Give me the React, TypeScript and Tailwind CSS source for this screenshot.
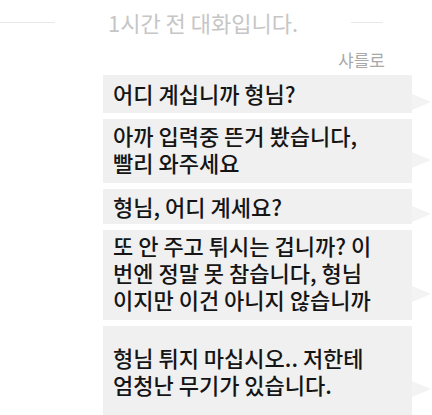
import React from 'react';

type Message = {
  lines: string[];
  pad: string;
  tail: string;
};

const messages: Message[] = [
  { lines: ['어디 계십니까 형님?'], pad: 'pt-[5px] pb-[6px]', tail: 'top-[19px]' },
  { lines: ['아까 입력중 뜬거 봤습니다,', '빨리 와주세요'], pad: 'pt-[3px] pb-[7px]', tail: 'top-[33px]' },
  { lines: ['형님, 어디 계세요?'], pad: 'pt-[4px] pb-[4px]', tail: 'top-[17px]' },
  {
    lines: ['또 안 주고 튀시는 겁니까? 이', '번엔 정말 못 참습니다, 형님', '이지만 이건 아니지 않습니까'],
    pad: 'pt-[2px] pb-[7px]',
    tail: 'top-[56px]',
  },
  { lines: ['형님 튀지 마십시오.. 저한테', '엄청난 무기가 있습니다.'], pad: 'pt-[18px] pb-[24px]', tail: 'top-[55px]' },
];

const Tail = ({ className }: { className: string }) => (
  <svg
    className={`absolute left-full ${className}`}
    width="19"
    height="16"
    viewBox="0 0 19 16"
  >
    <polygon points="0,0 19,8 0,16" fill="#f3f3f3" />
  </svg>
);

const Bubble = ({ msg }: { msg: Message }) => (
  <div className={`relative w-[309px] bg-[#f0f0f0] pl-[10px] pr-[6px] ${msg.pad}`}>
    <p className="text-[22px] leading-[27px] font-medium text-[#151515] whitespace-nowrap">
      {msg.lines.map((line, i) => (
        <React.Fragment key={line}>
          {i > 0 && <br />}
          {line}
        </React.Fragment>
      ))}
    </p>
    <Tail className={msg.tail} />
  </div>
);

export default function App() {
  return (
    <div
      className="w-[432px] h-[415px] overflow-hidden bg-white"
      style={{ fontFamily: '"Noto Sans CJK KR", "Noto Sans", sans-serif' }}
    >
      {/* time divider */}
      <div className="flex items-center h-[44px]">
        <div className="w-[55px] h-px bg-[#e8e8e8]" />
        <span className="ml-[53px] text-[22px] leading-none text-[#c6c6c6]">1시간 전 대화입니다.</span>
        <div className="ml-[53px] w-[32px] h-px bg-[#e8e8e8]" />
      </div>

      {/* sender name */}
      <div className="h-[31px] flex items-center justify-end pr-[47px]">
        <span className="text-[17px] leading-none text-[#a9a9a9]">샤를로</span>
      </div>

      <div className="ml-[103px] flex flex-col gap-[6px]">
        {messages.map((msg) => (
          <Bubble key={msg.lines[0]} msg={msg} />
        ))}
      </div>
    </div>
  );
}
